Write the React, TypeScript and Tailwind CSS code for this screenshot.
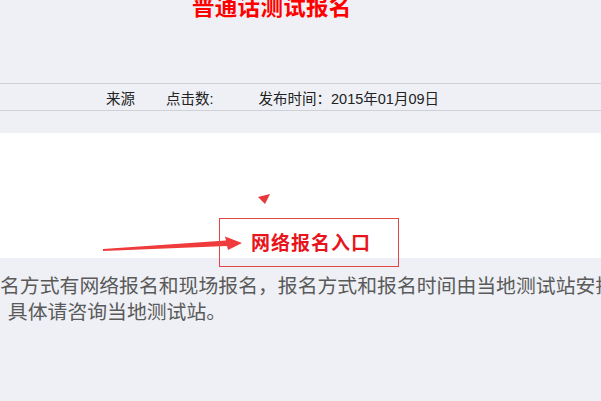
import React from "react";

const sans = { fontFamily: '"Liberation Sans", "Noto Sans CJK SC", sans-serif' };
const serif = { fontFamily: '"Liberation Serif", "Noto Sans CJK SC", serif' };

export default function App() {
  return (
    <div
      className="w-[601px] h-[401px] overflow-hidden bg-[#eef0f5]"
      style={sans}
    >
      {/* title, partly scrolled out of view */}
      <h1 className="mt-[-6px] pl-[192px] text-[22.5px] leading-[28px] font-bold text-[#ff0000] tracking-[0.3px]">
        普通话测试报名
      </h1>

      {/* meta row */}
      <div className="mt-[61px] h-[28px] border-y border-[#cfd1d5] flex items-center pl-[106px] pt-[6px] text-[14.5px] text-[#222]">
        <span>来源</span>
        <span className="ml-[31px]">点击数:</span>
        <span className="ml-[45px]">发布时间：2015年01月09日</span>
      </div>

      {/* white panel with the entry link */}
      <div className="relative mt-[22px] h-[125px] bg-white">
        <svg
          className="absolute inset-0 pointer-events-none"
          width="601"
          height="125"
          viewBox="0 0 601 125"
        >
          <polygon points="258,64 270,61 265,71" fill="#e8383d" />
          <polygon
            points="103,116 226,107.5 225,103.5 242,110 228,117 227,113 103,118"
            fill="#ef3b3b"
          />
        </svg>
        <div className="absolute left-[219px] top-[85px] w-[180px] h-[49px] border border-[#e04848] flex items-center justify-center pl-[4px] pt-[4px]">
          <span
            className="text-[19px] font-semibold text-[#e8141c] tracking-[1px]"
            style={serif}
          >
            网络报名入口
          </span>
        </div>
      </div>

      {/* body text, clipped on both sides */}
      <div
        className="mt-[15px] text-[19.85px] leading-[26px] text-[#5a5a5a] whitespace-nowrap"
        style={serif}
      >
        <p>名方式有网络报名和现场报名，报名方式和报名时间由当地测试站安排</p>
        <p className="ml-[-12px]">，具体请咨询当地测试站。</p>
      </div>
    </div>
  );
}
